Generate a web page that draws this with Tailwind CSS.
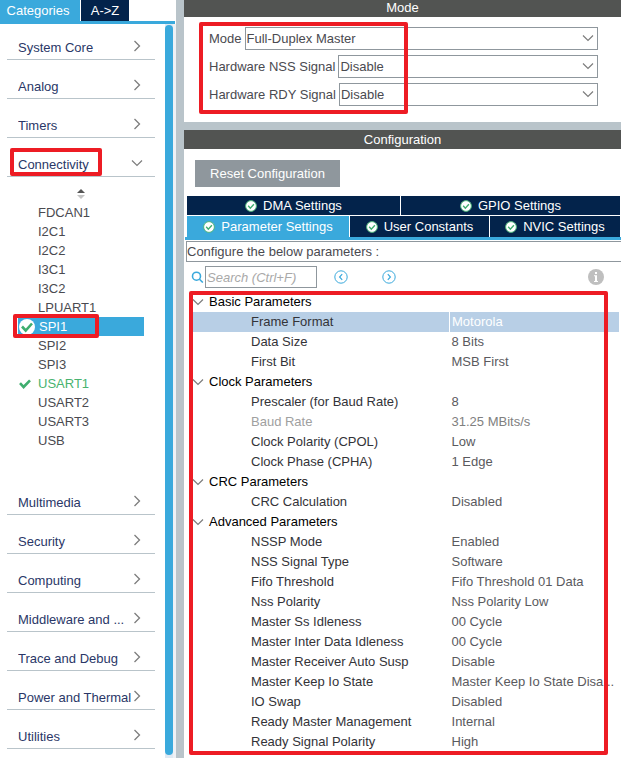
<!DOCTYPE html>
<html lang="en">
<head>
<meta charset="utf-8">
<title>SPI1 Mode and Configuration</title>
<script src="https://cdn.jsdelivr.net/npm/@tailwindcss/browser@4"></script>
</head>
<body class="bg-white font-['Liberation_Sans',Arial,sans-serif] text-[13px] leading-5 text-[#4a4a50]">
<svg class="hidden" aria-hidden="true">
  <symbol id="right" viewBox="0 0 8 12"><path d="M1.5 1 6.5 6l-5 5" fill="none" stroke="#7d7d7d" stroke-width="1.3"/></symbol>
  <symbol id="down" viewBox="0 0 12 8"><path d="M1 1.5 6 6.5l5-5" fill="none" stroke="#7d7d7d" stroke-width="1.2"/></symbol>
  <symbol id="ok" viewBox="0 0 12 12"><circle cx="6" cy="6" r="5.4" fill="#fff" stroke="#4cb37a" stroke-width="1"/><path d="m3.2 5.8 2.1 2.3 3.6-3.9" fill="none" stroke="#3fae6f" stroke-width="1.4"/></symbol>
</svg>
<div class="flex min-h-screen">
  <aside class="flex w-44 shrink-0 flex-col">
    <div class="mr-px flex gap-px border-b-3 border-[#3aa9dc] text-white">
      <button class="h-[21px] w-20 bg-[#3aa9dc] pr-1">Categories</button>
      <button class="h-[21px] w-12 bg-[#03234b]">A-&gt;Z</button>
    </div>
    <div class="flex flex-1">
      <nav class="flex min-w-0 flex-1 flex-col pr-2.5 pl-[7px] text-[#2a3767]">
        <button class="flex h-9 items-end justify-between border-b border-[#b9c4ca] pr-3.5 pb-px pl-[11px]"><span class="w-[114px] truncate text-left">System Core</span><svg class="mb-1.5 h-3 w-2 shrink-0"><use href="#right"/></svg></button>
        <button class="flex h-[39px] items-end justify-between border-b border-[#b9c4ca] pr-3.5 pb-px pl-[11px]"><span class="w-[114px] truncate text-left">Analog</span><svg class="mb-1.5 h-3 w-2 shrink-0"><use href="#right"/></svg></button>
        <button class="flex h-[39px] items-end justify-between border-b border-[#b9c4ca] pr-3.5 pb-px pl-[11px]"><span class="w-[114px] truncate text-left">Timers</span><svg class="mb-1.5 h-3 w-2 shrink-0"><use href="#right"/></svg></button>
        <button class="relative flex h-[39px] items-end justify-between border-b border-[#b9c4ca] pr-3 pb-px pl-[11px]"><span>Connectivity</span><svg class="mb-2 h-2 w-3 shrink-0"><use href="#down"/></svg>
          <span class="absolute top-2.5 left-[3px] h-7 w-[92px] rounded-xs border-4 border-[#ed1c24]"></span></button>
        <div class="flex flex-col pb-[26px] text-[#4a4a50]">
          <button class="flex h-[26px] items-center justify-center pt-2" aria-label="Sort"><svg class="h-3 w-2.5" viewBox="0 0 10 12"><path d="m5 1 4 4H1z" fill="#555"/><path d="M1 7h8l-4 4z" fill="#c4c4c4"/></svg></button>
          <a href="#" class="h-[19px] pl-[31px] leading-[19px]">FDCAN1</a>
          <a href="#" class="h-[19px] pl-[31px] leading-[19px]">I2C1</a>
          <a href="#" class="h-[19px] pl-[31px] leading-[19px]">I2C2</a>
          <a href="#" class="h-[19px] pl-[31px] leading-[19px]">I3C1</a>
          <a href="#" class="h-[19px] pl-[31px] leading-[19px]">I3C2</a>
          <a href="#" class="h-[19px] pl-[31px] leading-[19px]">LPUART1</a>
          <a href="#" class="relative mr-[11px] ml-[11px] flex h-[19px] items-center gap-1 bg-[#3aa9dc] pl-px leading-[19px] text-white"><svg class="size-4" viewBox="0 0 16 16"><circle cx="8" cy="8" r="8" fill="#fff"/><path d="m3 7.5 3.7 4 6.3-7" fill="none" stroke="#3fae6f" stroke-width="2.6"/></svg>SPI1
            <span class="absolute -top-[3px] -left-[5px] h-6 w-[86px] rounded-xs border-4 border-[#ed1c24]"></span></a>
          <a href="#" class="h-[19px] pl-[31px] leading-[19px]">SPI2</a>
          <a href="#" class="h-[19px] pl-[31px] leading-[19px]">SPI3</a>
          <a href="#" class="flex h-[19px] items-center gap-[7px] pl-3 leading-[19px] text-[#49b36f]"><svg class="h-2.5 w-3" viewBox="0 0 12 10"><path d="m1 4.2 3.6 3.8L11 1.3" fill="none" stroke="#3fae6f" stroke-width="2.6"/></svg>USART1</a>
          <a href="#" class="h-[19px] pl-[31px] leading-[19px]">USART2</a>
          <a href="#" class="h-[19px] pl-[31px] leading-[19px]">USART3</a>
          <a href="#" class="h-[19px] pl-[31px] leading-[19px]">USB</a>
        </div>
        <button class="flex h-[39px] items-end justify-between border-b border-[#b9c4ca] pr-3.5 pb-px pl-[11px]"><span class="w-[114px] truncate text-left">Multimedia</span><svg class="mb-1.5 h-3 w-2 shrink-0"><use href="#right"/></svg></button>
        <button class="flex h-[39px] items-end justify-between border-b border-[#b9c4ca] pr-3.5 pb-px pl-[11px]"><span class="w-[114px] truncate text-left">Security</span><svg class="mb-1.5 h-3 w-2 shrink-0"><use href="#right"/></svg></button>
        <button class="flex h-[39px] items-end justify-between border-b border-[#b9c4ca] pr-3.5 pb-px pl-[11px]"><span class="w-[114px] truncate text-left">Computing</span><svg class="mb-1.5 h-3 w-2 shrink-0"><use href="#right"/></svg></button>
        <button class="flex h-[39px] items-end justify-between border-b border-[#b9c4ca] pr-3.5 pb-px pl-[11px]"><span class="w-[114px] truncate text-left">Middleware and ...</span><svg class="mb-1.5 h-3 w-2 shrink-0"><use href="#right"/></svg></button>
        <button class="flex h-[39px] items-end justify-between border-b border-[#b9c4ca] pr-3.5 pb-px pl-[11px]"><span class="w-[114px] truncate text-left">Trace and Debug</span><svg class="mb-1.5 h-3 w-2 shrink-0"><use href="#right"/></svg></button>
        <button class="flex h-[39px] items-end justify-between border-b border-[#b9c4ca] pr-3.5 pb-px pl-[11px]"><span class="w-[114px] truncate text-left">Power and Thermal</span><svg class="mb-1.5 h-3 w-2 shrink-0"><use href="#right"/></svg></button>
        <button class="flex h-[39px] items-end justify-between border-b border-[#b9c4ca] pr-3.5 pb-px pl-[11px]"><span class="w-[114px] truncate text-left">Utilities</span><svg class="mb-1.5 h-3 w-2 shrink-0"><use href="#right"/></svg></button>
      </nav>
      <div class="flex w-[11px] bg-[#eef1f5] pr-[3px]">
        <div class="flex flex-1 bg-[#dfe9f3] pt-px pb-[3px]"><div class="flex-1 rounded-full bg-[#3aa9dc]"></div></div>
      </div>
    </div>
  </aside>
  <div class="w-2 shrink-0 bg-[#b9c4ca]"></div>
  <main class="flex min-w-0 flex-1 flex-col">
    <h2 class="h-[17px] bg-[#525452] text-center leading-[15px] text-white">Mode</h2>
    <section class="relative flex flex-col gap-[5px] border-b-8 border-[#b9c4ca] pt-2.5 pr-[23px] pb-4 pl-[25px]">
      <div class="flex items-center gap-[3px]"><label for="mode">Mode</label>
        <div class="relative flex-1"><select id="mode" class="block h-[23px] w-full appearance-none border border-[#8f979d] bg-white pl-px"><option>Full-Duplex Master</option></select><svg class="pointer-events-none absolute top-[7px] right-1 h-2 w-3"><use href="#down"/></svg></div></div>
      <div class="flex items-center gap-[3px]"><label for="nss">Hardware NSS Signal</label>
        <div class="relative flex-1"><select id="nss" class="block h-[23px] w-full appearance-none border border-[#8f979d] bg-white pl-px"><option>Disable</option></select><svg class="pointer-events-none absolute top-[7px] right-1 h-2 w-3"><use href="#down"/></svg></div></div>
      <div class="flex items-center gap-[3px]"><label for="rdy">Hardware RDY Signal</label>
        <div class="relative flex-1"><select id="rdy" class="block h-[23px] w-full appearance-none border border-[#8f979d] bg-white pl-px"><option>Disable</option></select><svg class="pointer-events-none absolute top-[7px] right-1 h-2 w-3"><use href="#down"/></svg></div></div>
      <div class="pointer-events-none absolute top-[5px] left-[15px] h-[92px] w-[209px] rounded-xs border-4 border-[#ed1c24]"></div>
    </section>
    <h2 class="h-[19px] bg-[#525452] text-center leading-[19px] text-white">Configuration</h2>
    <div class="pt-[11px] pb-[9px] pl-[11px]"><button class="h-[27px] w-[145px] bg-[#8f979d] text-white">Reset Configuration</button></div>
    <div class="flex flex-col gap-px pr-px pl-[3px] text-white">
      <div class="flex h-[19px] gap-px">
        <button class="flex w-[213px] items-center justify-center gap-1.5 bg-[#03234b]"><svg class="size-3"><use href="#ok"/></svg>DMA Settings</button>
        <button class="flex flex-1 items-center justify-center gap-1.5 bg-[#03234b]"><svg class="size-3"><use href="#ok"/></svg>GPIO Settings</button>
      </div>
      <div class="flex h-[21px] gap-px">
        <button class="flex w-[162px] items-center justify-center gap-1.5 bg-[#3aa9dc]"><svg class="size-3"><use href="#ok"/></svg>Parameter Settings</button>
        <button class="flex w-[139px] items-center justify-center gap-1.5 bg-[#03234b]"><svg class="size-3"><use href="#ok"/></svg>User Constants</button>
        <button class="flex flex-1 items-center justify-center gap-1.5 bg-[#03234b]"><svg class="size-3"><use href="#ok"/></svg>NVIC Settings</button>
      </div>
    </div>
    <div class="ml-px h-[3px] bg-[#3aa9dc]"></div>
    <p class="mt-px ml-0.5 h-[21px] border-y border-l border-[#8f979d] leading-[19px]">Configure the below parameters :</p>
    <div class="flex h-[30px] items-center pr-[17px] pl-[7px]">
      <label for="search" aria-label="Search"><svg class="h-3 w-3.5" viewBox="0 0 14 12" fill="none" stroke="#3aa9dc" stroke-width="1.6"><circle cx="5.5" cy="5.2" r="4"/><path d="m8.5 8.2 3.3 3.3"/></svg></label>
      <input id="search" placeholder="Search (Ctrl+F)" class="h-[22px] w-28 border border-[#8f979d] px-px italic placeholder:text-[#a9a9a9]">
      <button class="ml-[17px]" aria-label="Previous"><svg class="size-3.5" viewBox="0 0 14 14" fill="none" stroke="#3aa9dc"><circle cx="7" cy="7" r="6.2"/><path d="M8.2 4.2 5.6 7l2.6 2.8" stroke-width="1.2"/></svg></button>
      <button class="ml-[34px]" aria-label="Next"><svg class="size-3.5" viewBox="0 0 14 14" fill="none" stroke="#3aa9dc"><circle cx="7" cy="7" r="6.2"/><path d="M5.8 4.2 8.4 7 5.8 9.8" stroke-width="1.2"/></svg></button>
      <button class="ml-auto" aria-label="Information"><svg class="size-4" viewBox="0 0 16 16"><circle cx="8" cy="8" r="8" fill="#bfbfbf"/><path d="M7 3h2v2H7zM6 6.3h3V12h1v1H6v-1h1V7.3H6z" fill="#fff"/></svg></button>
    </div>
    <div class="relative pr-0.5 pb-1.5 pl-1.5">
      <table class="w-full table-fixed border-collapse text-[#5a5a5e]">
        <colgroup><col class="w-[60.5%]"><col></colgroup>
        <tbody class="[&_td]:h-5 [&_td]:truncate [&_td]:p-0 [&_td]:pl-0.5 [&_th]:h-5 [&_th]:p-0 [&_th]:text-left [&_th]:font-normal">
          <tr class="text-black"><th colspan="2"><span class="flex items-center gap-[5px] pl-0.5"><svg class="h-2 w-3"><use href="#down"/></svg>Basic Parameters</span></th></tr>
          <tr class="bg-[#b8cfe6] text-white"><th scope="row" class="border-r border-white text-[#333338]"><span class="pl-[61px]">Frame Format</span></th><td>Motorola</td></tr>
          <tr><th scope="row" class="text-[#333338]"><span class="pl-[61px]">Data Size</span></th><td>8 Bits</td></tr>
          <tr><th scope="row" class="text-[#333338]"><span class="pl-[61px]">First Bit</span></th><td>MSB First</td></tr>
          <tr class="text-black"><th colspan="2"><span class="flex items-center gap-[5px] pl-0.5"><svg class="h-2 w-3"><use href="#down"/></svg>Clock Parameters</span></th></tr>
          <tr><th scope="row" class="text-[#333338]"><span class="pl-[61px]">Prescaler (for Baud Rate)</span></th><td>8</td></tr>
          <tr><th scope="row" class="text-[#a0a0a0]"><span class="pl-[61px]">Baud Rate</span></th><td class="text-[#808080]">31.25 MBits/s</td></tr>
          <tr><th scope="row" class="text-[#333338]"><span class="pl-[61px]">Clock Polarity (CPOL)</span></th><td>Low</td></tr>
          <tr><th scope="row" class="text-[#333338]"><span class="pl-[61px]">Clock Phase (CPHA)</span></th><td>1 Edge</td></tr>
          <tr class="text-black"><th colspan="2"><span class="flex items-center gap-[5px] pl-0.5"><svg class="h-2 w-3"><use href="#down"/></svg>CRC Parameters</span></th></tr>
          <tr><th scope="row" class="text-[#333338]"><span class="pl-[61px]">CRC Calculation</span></th><td>Disabled</td></tr>
          <tr class="text-black"><th colspan="2"><span class="flex items-center gap-[5px] pl-0.5"><svg class="h-2 w-3"><use href="#down"/></svg>Advanced Parameters</span></th></tr>
          <tr><th scope="row" class="text-[#333338]"><span class="pl-[61px]">NSSP Mode</span></th><td>Enabled</td></tr>
          <tr><th scope="row" class="text-[#333338]"><span class="pl-[61px]">NSS Signal Type</span></th><td>Software</td></tr>
          <tr><th scope="row" class="text-[#333338]"><span class="pl-[61px]">Fifo Threshold</span></th><td>Fifo Threshold 01 Data</td></tr>
          <tr><th scope="row" class="text-[#333338]"><span class="pl-[61px]">Nss Polarity</span></th><td>Nss Polarity Low</td></tr>
          <tr><th scope="row" class="text-[#333338]"><span class="pl-[61px]">Master Ss Idleness</span></th><td>00 Cycle</td></tr>
          <tr><th scope="row" class="text-[#333338]"><span class="pl-[61px]">Master Inter Data Idleness</span></th><td>00 Cycle</td></tr>
          <tr><th scope="row" class="text-[#333338]"><span class="pl-[61px]">Master Receiver Auto Susp</span></th><td>Disable</td></tr>
          <tr><th scope="row" class="text-[#333338]"><span class="pl-[61px]">Master Keep Io State</span></th><td>Master Keep Io State Disa...</td></tr>
          <tr><th scope="row" class="text-[#333338]"><span class="pl-[61px]">IO Swap</span></th><td>Disabled</td></tr>
          <tr><th scope="row" class="text-[#333338]"><span class="pl-[61px]">Ready Master Management</span></th><td>Internal</td></tr>
          <tr><th scope="row" class="text-[#333338]"><span class="pl-[61px]">Ready Signal Polarity</span></th><td>High</td></tr>
        </tbody>
      </table>
      <div class="pointer-events-none absolute -top-px right-[13px] bottom-[3px] left-[5px] rounded-xs border-4 border-[#ed1c24]"></div>
    </div>
  </main>
</div>
</body>
</html>
